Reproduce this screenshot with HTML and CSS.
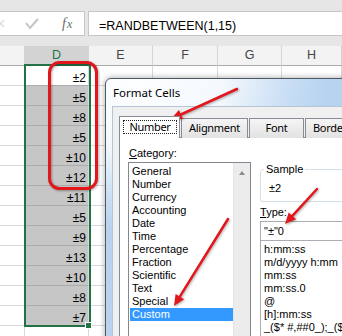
FILE: index.html
```html
<!DOCTYPE html>
<html>
<head>
<meta charset="utf-8">
<link rel="stylesheet" href="styles.css">
</head>
<body>
<div class="app">
  <div class="fbar">
    <div class="fbtns">
      <svg class="fico" width="44" height="23" viewBox="0 0 44 23">
        <line x1="-4" y1="8" x2="3" y2="15" stroke="#dcdcdc" stroke-width="1.5"/>
        <line x1="3" y1="8" x2="-4" y2="15" stroke="#dcdcdc" stroke-width="1.5"/>
        <polyline points="25,11 29,16 37,7" fill="none" stroke="#c4c4c4" stroke-width="2"/>
      </svg>
      <span class="fx">f<span class="fxx">x</span></span>
    </div>
    <div class="formula">=RANDBETWEEN(1,15)</div>
  </div>

  <div class="sheet">
    <div class="c h"></div><div class="c h hsel">D</div><div class="c h">E</div><div class="c h">F</div><div class="c h">G</div><div class="c h">H</div>

    <div class="c"></div><div class="c d act">±2</div><div class="c"></div><div class="c"></div><div class="c"></div><div class="c"></div>
    <div class="c"></div><div class="c d">±5</div><div class="c"></div><div class="c"></div><div class="c"></div><div class="c"></div>
    <div class="c"></div><div class="c d">±8</div><div class="c"></div><div class="c"></div><div class="c"></div><div class="c"></div>
    <div class="c"></div><div class="c d">±5</div><div class="c"></div><div class="c"></div><div class="c"></div><div class="c"></div>
    <div class="c"></div><div class="c d">±10</div><div class="c"></div><div class="c"></div><div class="c"></div><div class="c"></div>
    <div class="c"></div><div class="c d">±12</div><div class="c"></div><div class="c"></div><div class="c"></div><div class="c"></div>
    <div class="c"></div><div class="c d">±11</div><div class="c"></div><div class="c"></div><div class="c"></div><div class="c"></div>
    <div class="c"></div><div class="c d">±5</div><div class="c"></div><div class="c"></div><div class="c"></div><div class="c"></div>
    <div class="c"></div><div class="c d">±9</div><div class="c"></div><div class="c"></div><div class="c"></div><div class="c"></div>
    <div class="c"></div><div class="c d">±13</div><div class="c"></div><div class="c"></div><div class="c"></div><div class="c"></div>
    <div class="c"></div><div class="c d">±10</div><div class="c"></div><div class="c"></div><div class="c"></div><div class="c"></div>
    <div class="c"></div><div class="c d">±8</div><div class="c"></div><div class="c"></div><div class="c"></div><div class="c"></div>
    <div class="c"></div><div class="c d">±7</div><div class="c"></div><div class="c"></div><div class="c"></div><div class="c"></div>
    <div class="c"></div><div class="c"></div><div class="c"></div><div class="c"></div><div class="c"></div><div class="c"></div>
  </div>

  <div class="selbox"></div>
  <div class="handle"></div>

  <div class="dialog">
    <div class="title">Format Cells</div>
    <div class="client">
      <div class="tabs">
        <div class="tab on"><span class="focus">Number</span></div>
        <div class="tab t-align">Alignment</div>
        <div class="tab t-font">Font</div>
        <div class="tab t-border">Border</div>
      </div>
      <div class="page">
        <div class="col">
          <div class="lbl"><u>C</u>ategory:</div>
          <div class="list cat">
            <div class="items">
              <div class="it">General</div>
              <div class="it">Number</div>
              <div class="it">Currency</div>
              <div class="it">Accounting</div>
              <div class="it">Date</div>
              <div class="it">Time</div>
              <div class="it">Percentage</div>
              <div class="it">Fraction</div>
              <div class="it">Scientific</div>
              <div class="it">Text</div>
              <div class="it">Special</div>
              <div class="it hl">Custom</div>
            </div>
            <div class="vscroll"><div class="upbtn"><span class="uparrow"></span></div></div>
          </div>
        </div>
        <div class="col col-r">
          <fieldset class="sample">
            <legend>Sample</legend>
            <div class="sval">±2</div>
          </fieldset>
          <div class="lbl tlbl"><u>T</u>ype:</div>
          <div class="typein">"±"0</div>
          <div class="list fmt">
            <div class="it">h:mm:ss</div>
            <div class="it">m/d/yyyy h:mm</div>
            <div class="it">mm:ss</div>
            <div class="it">mm:ss.0</div>
            <div class="it">@</div>
            <div class="it">[h]:mm:ss</div>
            <div class="it">_($* #,##0_);_($* (#,##0);_($* "-"_);_(@_)</div>
          </div>
        </div>
      </div>
    </div>
  </div>

  <svg class="ann" width="342" height="336" viewBox="0 0 342 336">
    <rect x="49.5" y="62.5" width="47" height="126" rx="10" ry="10" fill="none" stroke="#e3161c" stroke-width="3"/>
    <line x1="237" y1="89" x2="181" y2="114.5" stroke="#e3161c" stroke-width="2.5" stroke-linecap="round"/>
    <polygon points="171,119 183.1,119 178.9,109.9" fill="#e3161c"/>
    <line x1="228" y1="219" x2="179.8" y2="296.7" stroke="#e3161c" stroke-width="2.5" stroke-linecap="round"/>
    <polygon points="174,306 184.1,299.3 175.6,294" fill="#e3161c"/>
    <line x1="317" y1="189" x2="292.4" y2="215.9" stroke="#e3161c" stroke-width="2.5" stroke-linecap="round"/>
    <polygon points="285,224 296.1,219.3 288.7,212.5" fill="#e3161c"/>
  </svg>
</div>
</body>
</html>
```

FILE: styles.css
```css
* { box-sizing: border-box; }

body {
  margin: 0;
  width: 342px;
  height: 336px;
  overflow: hidden;
  background: #fff;
  font-family: "Liberation Sans", Arial, sans-serif;
}

.app {
  position: relative;
  width: 342px;
  height: 336px;
  overflow: hidden;
}

/* formula bar */
.fbar {
  height: 46px;
  background: #e6e6e6;
  display: flex;
  align-items: flex-start;
  padding-top: 11px;
  gap: 3px;
}

.fbtns {
  width: 86px;
  height: 25px;
  margin-left: -1px;
  background: #fff;
  border: 1px solid #c6c6c6;
  display: flex;
  align-items: flex-start;
  padding-left: 1px;
}

.fico { display: block; overflow: visible; }

.fx {
  margin-left: 17px;
  font-family: "Liberation Serif", serif;
  font-style: italic;
  font-size: 14px;
  line-height: 23px;
  color: #6a6a6a;
}

.fxx { font-size: 12px; margin-left: 1px; }

.formula {
  flex: 1;
  height: 25px;
  background: #fff;
  border: 1px solid #c6c6c6;
  border-right: none;
  padding: 5px 0 0 10px;
  font-size: 12.5px;
  line-height: 18px;
  color: #000;
  white-space: nowrap;
}

/* sheet */
.sheet {
  display: grid;
  grid-template-columns: 25px 64px 64px 65px 64px 60px;
  grid-auto-rows: 20px;
}

.c {
  border-right: 1px solid #d9d9d9;
  border-bottom: 1px solid #d9d9d9;
}

.h {
  background: #f3f3f3;
  border-right: 1px solid #d4d4d4;
  border-bottom: 1px solid #ababab;
  text-align: center;
  font-size: 12.5px;
  line-height: 19px;
  color: #444;
}

.hsel {
  background: #d3d3d3;
  color: #217346;
  border-bottom: 2px solid #217346;
}

.d {
  background: #c6c6c6;
  border-bottom-color: #acacac;
  text-align: right;
  padding: 5px 2px 0 0;
  font-size: 12px;
  line-height: 14px;
  color: #000;
}

.d.act { background: #fff; }

.selbox {
  position: absolute;
  left: 24px;
  top: 64px;
  width: 67px;
  height: 263px;
  border: 2px solid #217346;
}

.handle {
  position: absolute;
  left: 85px;
  top: 322px;
  width: 7px;
  height: 7px;
  background: #217346;
  border: 1px solid #fff;
}

/* dialog */
.dialog {
  position: absolute;
  left: 105px;
  top: 78px;
  width: 300px;
  height: 290px;
  border: 1px solid #4e5966;
  border-radius: 6px 6px 0 0;
  background: radial-gradient(ellipse 190px 150px at 30px 0px, #fdfeff 0%, #f4f9fd 45%, #c9def4 80%, #b8d3f0 100%);
  box-shadow: 0 0 6px rgba(0, 0, 0, 0.35);
  font-family: "Noto Sans", "Open Sans", sans-serif;
  color: #000;
}

.title {
  height: 27px;
  line-height: 27px;
  padding-left: 7px;
  font-size: 11.5px;
}

.client {
  margin-left: 6px;
  height: 270px;
  border: 1px solid #b6c5d6;
  background: #f0f0f0;
  padding: 9px 0 0 6px;
  display: flex;
  flex-direction: column;
}

.tabs {
  display: flex;
  align-items: flex-end;
  height: 22px;
  font-size: 11px;
  letter-spacing: -0.3px;
}

.tab {
  height: 20px;
  line-height: 18px;
  border: 1px solid #898c95;
  border-bottom: none;
  background: linear-gradient(#f5f5f5, #e2e2e2);
  text-align: center;
  margin-right: 1px;
  white-space: nowrap;
  position: relative;
}

.tab.on {
  width: 61px;
  height: 22px;
  background: #fff;
  z-index: 1;
  padding: 3px 2px 0 3px;
}

.focus {
  display: block;
  height: 14px;
  line-height: 12px;
  border: 1px dotted #222;
}

.t-align { width: 67px; }
.t-font { width: 55px; }
.t-border { width: 60px; text-align: left; padding-left: 7px; }

.page {
  flex: 1;
  margin-top: -1px;
  border: 1px solid #898c95;
  background: #fff;
  padding: 8px 0 0 8px;
  display: grid;
  grid-template-columns: 123px 1fr;
  column-gap: 9px;
  font-family: "Liberation Sans", Arial, sans-serif;
  font-size: 11px;
}

.col { display: flex; flex-direction: column; min-width: 0; }

.col-r { padding-top: 16px; }

.lbl {
  height: 14px;
  line-height: 14px;
  margin: 0 0 2px 1px;
}

.list {
  flex: 1;
  border: 1px solid #828790;
  background: #fff;
}

.cat { display: flex; }

.items { flex: 1; padding: 2px 0 0 1px; }

.it {
  height: 13px;
  line-height: 13px;
  padding-left: 2px;
  white-space: nowrap;
}

.hl { background: #3399ff; color: #fff; }

.vscroll {
  width: 17px;
  background: #ececec;
  border-left: 1px solid #e4e4e4;
}

.upbtn {
  height: 17px;
  display: flex;
  align-items: center;
  justify-content: center;
  padding-top: 3px;
}

.uparrow {
  width: 0;
  height: 0;
  border-left: 3.5px solid transparent;
  border-right: 3.5px solid transparent;
  border-bottom: 4px solid #8a8a8a;
}

.sample {
  margin: 0;
  padding: 5px 0 6px 8px;
  border: 1px solid #d5dfe5;
  border-radius: 3px;
  min-width: 0;
}

.sample legend {
  margin-left: -5px;
  padding: 0 2px;
  line-height: 14px;
}

.sval { line-height: 14px; }

.tlbl { margin: 3px 0 2px 0; }

.typein {
  height: 20px;
  border: 1px solid #abadb3;
  padding-left: 3px;
  line-height: 18px;
  white-space: nowrap;
}

.fmt {
  margin-top: -1px;
  padding: 2px 0 0 1px;
  border-color: #abadb3;
}

.fmt .it { padding-left: 2px; }

/* annotations */
.ann {
  position: absolute;
  left: 0;
  top: 0;
  pointer-events: none;
  filter: drop-shadow(1px 1px 1px rgba(0, 0, 0, 0.3));
}
```
